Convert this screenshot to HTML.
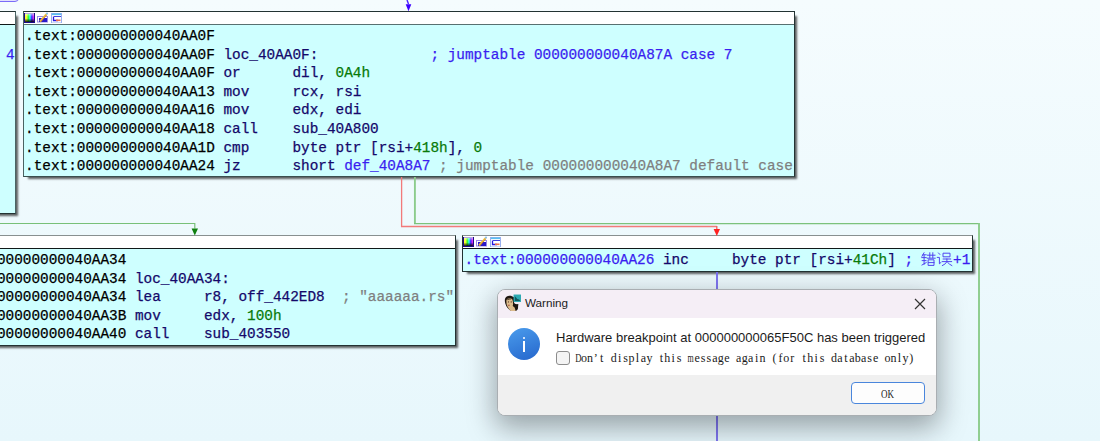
<!DOCTYPE html>
<html><head><meta charset="utf-8">
<style>
html,body{margin:0;padding:0;}
body{width:1100px;height:441px;overflow:hidden;position:relative;background:linear-gradient(#f5fcfe,#e7f7fc);font-family:"Liberation Mono",monospace;}
.abs{position:absolute;}
.node{position:absolute;border:1px solid #223232;background:#ceffff;box-shadow:3.5px 3.5px 2px -1.5px rgba(0,0,0,0.62);}
.hdr{position:absolute;left:0;right:0;top:0;height:12px;background:#fff;border-bottom:1px solid #101818;}
.code{position:absolute;-webkit-text-stroke:0.25px currentColor;font-size:14.38px;line-height:18.56px;white-space:pre;color:#000;}
.n{color:#14086a;}
.g{color:#087a08;}
.b{color:#3a1ef0;}
.gr{color:#7f7f7f;}
.cb{font-family:"Liberation Serif",serif;font-size:12px;line-height:14px;color:#1a1a1a;white-space:nowrap;}
.cb i{font-style:normal;display:inline-flex;justify-content:center;width:5.965px;}
.cb b{font-weight:normal;display:inline-block;}
</style></head><body>

<!-- purple partial box at top-left -->
<div class="abs" style="left:-10px;top:-6px;width:27px;height:6px;background:#e2e0fd;border:1.5px solid #7b6cf8;border-radius:4px;"></div>

<!-- left partial node -->
<div class="node" style="left:-10px;top:11px;width:24px;height:201px;border-right-color:#4a6464;">
  <div class="hdr"></div>
  <div class="code" style="left:15px;top:33.8px;"><span class="b">4</span></div>
</div>

<!-- main node -->
<div class="node" style="left:23px;top:11px;width:770px;height:164px;border-left-color:#4a6262;border-bottom-color:#3a4e4e;">
  <div class="hdr" style="border-bottom-color:#587070;"><svg class="abs" style="left:0;top:0px;" width="40" height="11" viewBox="0 0 40 11">
<defs>
<linearGradient id="rb" x1="0" x2="1" y1="0" y2="0"><stop offset="0" stop-color="#ffff30"/><stop offset="0.15" stop-color="#ffff30"/><stop offset="0.38" stop-color="#30ff30"/><stop offset="0.55" stop-color="#30ffff"/><stop offset="0.75" stop-color="#4020ff"/><stop offset="1" stop-color="#ff30f0"/></linearGradient>
<linearGradient id="dk" x1="0" x2="0" y1="0" y2="1"><stop offset="0" stop-color="#fff" stop-opacity="0.5"/><stop offset="0.35" stop-color="#fff" stop-opacity="0"/><stop offset="0.55" stop-color="#000" stop-opacity="0"/><stop offset="1" stop-color="#000" stop-opacity="0.9"/></linearGradient>
</defs>
<rect x="0" y="1" width="11" height="10" fill="#1c0a8a"/>
<rect x="1" y="1" width="9" height="1" fill="#b8a8e0"/>
<rect x="1" y="2" width="9" height="8" fill="url(#rb)"/>
<rect x="1" y="2" width="9" height="8" fill="url(#dk)"/>
<rect x="13.5" y="4.5" width="10" height="5.5" fill="none" stroke="#9888e8" stroke-width="1"/>
<rect x="15" y="6" width="8" height="4" fill="#2a18c8"/>
<path d="M16 9.5 L22.5 2.2" stroke="#e8c040" stroke-width="1.9"/>
<path d="M16.5 9.8 L22.8 2.8" stroke="#d07020" stroke-width="0.7"/>
<circle cx="23" cy="1.6" r="1.1" fill="#88c0e8"/>
<rect x="27.5" y="1.5" width="10" height="9.5" fill="#fff" stroke="#98b0f0" stroke-width="1"/>
<rect x="28" y="1.5" width="9" height="1.6" fill="#58c0f0"/>
<path d="M30 4.5 H37" stroke="#4040e0" stroke-width="1"/>
<path d="M29.5 4.5 V8.5 H34" stroke="#2818e0" stroke-width="1.3" fill="none"/>
<path d="M32 8.3 H36.5" stroke="#e87050" stroke-width="1.6"/>
</svg></div>
  <div class="code" style="left:1px;top:15.2px;">.text:000000000040AA0F
.text:000000000040AA0F <span class="n">loc_40AA0F:</span>             <span class="b">; jumptable 000000000040A87A case 7</span>
.text:000000000040AA0F <span class="n">or      dil, </span><span class="g">0A4h</span>
.text:000000000040AA13 <span class="n">mov     rcx, rsi</span>
.text:000000000040AA16 <span class="n">mov     edx, edi</span>
.text:000000000040AA18 <span class="n">call    sub_40A800</span>
.text:000000000040AA1D <span class="n">cmp     byte ptr [rsi+</span><span class="g">418h</span><span class="n">], </span><span class="g">0</span>
.text:000000000040AA24 <span class="n">jz      short </span><span class="b">def_40A8A7</span> <span class="gr">; jumptable 000000000040A8A7 default case</span></div>
</div>

<!-- bottom-left node -->
<div class="node" style="left:-10px;top:235px;width:464px;height:109px;border-top-color:#889090;">
  <div class="hdr"></div>
  <div class="code" style="left:-54.5px;top:15.2px;">.text:000000000040AA34
.text:000000000040AA34 <span class="n">loc_40AA34:</span>
.text:000000000040AA34 <span class="n">lea     r8, off_442ED8</span>  <span class="gr">; "aaaaaa.rs"</span>
.text:000000000040AA3B <span class="n">mov     edx, </span><span class="g">100h</span>
.text:000000000040AA40 <span class="n">call    sub_403550</span></div>
</div>

<!-- right node -->
<div class="node" style="left:462px;top:235px;width:509px;height:35px;border-top-color:#889090;">
  <div class="hdr"><svg class="abs" style="left:0;top:0px;" width="40" height="11" viewBox="0 0 40 11">
<defs>
<linearGradient id="rb" x1="0" x2="1" y1="0" y2="0"><stop offset="0" stop-color="#ffff30"/><stop offset="0.15" stop-color="#ffff30"/><stop offset="0.38" stop-color="#30ff30"/><stop offset="0.55" stop-color="#30ffff"/><stop offset="0.75" stop-color="#4020ff"/><stop offset="1" stop-color="#ff30f0"/></linearGradient>
<linearGradient id="dk" x1="0" x2="0" y1="0" y2="1"><stop offset="0" stop-color="#fff" stop-opacity="0.5"/><stop offset="0.35" stop-color="#fff" stop-opacity="0"/><stop offset="0.55" stop-color="#000" stop-opacity="0"/><stop offset="1" stop-color="#000" stop-opacity="0.9"/></linearGradient>
</defs>
<rect x="0" y="1" width="11" height="10" fill="#1c0a8a"/>
<rect x="1" y="1" width="9" height="1" fill="#b8a8e0"/>
<rect x="1" y="2" width="9" height="8" fill="url(#rb)"/>
<rect x="1" y="2" width="9" height="8" fill="url(#dk)"/>
<rect x="13.5" y="4.5" width="10" height="5.5" fill="none" stroke="#9888e8" stroke-width="1"/>
<rect x="15" y="6" width="8" height="4" fill="#2a18c8"/>
<path d="M16 9.5 L22.5 2.2" stroke="#e8c040" stroke-width="1.9"/>
<path d="M16.5 9.8 L22.8 2.8" stroke="#d07020" stroke-width="0.7"/>
<circle cx="23" cy="1.6" r="1.1" fill="#88c0e8"/>
<rect x="27.5" y="1.5" width="10" height="9.5" fill="#fff" stroke="#98b0f0" stroke-width="1"/>
<rect x="28" y="1.5" width="9" height="1.6" fill="#58c0f0"/>
<path d="M30 4.5 H37" stroke="#4040e0" stroke-width="1"/>
<path d="M29.5 4.5 V8.5 H34" stroke="#2818e0" stroke-width="1.3" fill="none"/>
<path d="M32 8.3 H36.5" stroke="#e87050" stroke-width="1.6"/>
</svg></div>
  <div class="code" style="left:1.5px;top:15.2px;"><span class="b">.text:000000000040AA26</span> <span class="n">inc     byte ptr [rsi+</span><span class="g">41Ch</span><span class="n">]</span> <span class="b">;     <span style="position:relative;left:-3.2px">+1</span></span></div>
</div>


<!-- CJK glyphs drawn -->
<svg class="abs" style="left:921px;top:252px;" width="34" height="15" viewBox="0 0 34 15">
<g stroke="#4c3cf0" stroke-width="0.95" fill="none" stroke-linecap="square">
<path d="M3 0.8 L1 4.2"/><path d="M2 2.8 H5.2"/><path d="M0.8 5.6 H5.2"/><path d="M1.2 8.6 H5"/><path d="M3.1 3 V12.2"/><path d="M1 13 L5.2 10.6"/>
<path d="M6.5 3.2 H14"/><path d="M8.8 0.8 V5.8"/><path d="M11.8 0.8 V5.8"/><path d="M6.2 6.2 H14.2"/>
<path d="M7.6 7.8 H13 V13.4 H7.6 Z"/><path d="M7.6 10.6 H13"/>
<path d="M17.5 1 L18.8 2.4"/><path d="M16.3 5.4 H18.4 V11.8 L20 10.4"/>
<path d="M22.5 1.2 H29 V4.8 H22.5 Z"/><path d="M22.2 7 H29.6"/><path d="M21.4 9.6 H30.6"/>
<path d="M25.9 7 V9.6 Q25 12 21.4 13.6"/><path d="M26.6 10.4 Q28.2 12.4 30.8 13.6"/>
</g></svg>

<!-- edges -->
<svg class="abs" style="left:0;top:0;" width="1100" height="441">
  <path d="M407 0 L408.5 4" stroke="#4a20ff" stroke-width="1.4" fill="none"/>
  <polygon points="405.7,4.2 411.3,4.2 408.5,11.2" fill="#3c00ff"/>
  <path d="M401.6 177 V226.5 H716.8" stroke="#f27a7a" stroke-width="1.3" fill="none"/>
  <path d="M716.8 226 V229" stroke="#f06060" stroke-width="1.3" fill="none"/>
  <polygon points="713.6,229 720,229 716.8,236" fill="#ff2020"/>
  <path d="M414.9 177 V223.6" stroke="#8ccc8c" stroke-width="1.9" fill="none"/>
  <path d="M414 223.6 H979" stroke="#7cc27c" stroke-width="1.3" fill="none"/>
  <path d="M979 223 V441" stroke="#8ccc8c" stroke-width="1.9" fill="none"/>
  <path d="M0 223.5 H194.8 V228.5" stroke="#78c078" stroke-width="1.2" fill="none"/>
  <polygon points="191.6,228.5 198,228.5 194.8,235.5" fill="#108010"/>
  <path d="M717 272 V441" stroke="#7a6ff0" stroke-width="1.9" fill="none"/>
</svg>

<!-- dialog -->
<div class="abs" style="left:497px;top:289px;width:438px;height:125px;border:1px solid #a9aeb2;border-radius:8px;box-shadow:0 10px 28px 2px rgba(10,15,20,0.36);background:#fff;overflow:hidden;font-family:'Liberation Sans',sans-serif;">
  <div class="abs" style="left:0;top:0;width:438px;height:28px;background:#f5eef6;"></div>
  <svg class="abs" style="left:6px;top:4px;" width="17" height="17" viewBox="0 0 16 16">
    <path d="M0.8 5.5 C1 2.5 3.5 1.2 6.5 1.6 L9.5 3 L9.5 8.5 C10.5 9.5 12 9.8 13.5 9.5 L13.2 12.5 C13.5 14 12.5 15.5 11 16 L7 16 C3.5 14.5 0.6 10 0.8 5.5Z" fill="#1e1610"/>
    <path d="M2.2 6 C2.8 3.8 6 3.2 7.6 4.8 C8.6 6.5 8.8 9.5 8.2 11.2 L10 12.8 L11 16 L6.5 16 C4.5 14.5 3 12 2.4 9.5Z" fill="#dcbb8c"/>
    <path d="M3 5.2 C4 4.2 6 4 7.2 4.8 L6 5.2 C5 5 4 5.2 3 5.8Z" fill="#3a2a1a"/>
    <circle cx="4.2" cy="7.5" r="0.6" fill="#5a3a28"/>
    <circle cx="6.8" cy="7.5" r="0.6" fill="#5a3a28"/>
    <path d="M3.6 10.6 L5.4 10.6" stroke="#a04030" stroke-width="0.8"/>
    <rect x="9" y="0.5" width="7.3" height="7" fill="#2eaab2"/>
    <path d="M10.2 2 V6.6 H15.3 L14.2 5.2 L12.5 4.8 L11.2 3Z" fill="#115a60"/>
  </svg>
  <div class="abs" style="left:27px;top:6px;font-size:11.7px;line-height:14px;color:#1b1b1b;">Warning</div>
  <svg class="abs" style="left:416px;top:8px;" width="12" height="12" viewBox="0 0 12 12"><path d="M1 1 L11 11 M11 1 L1 11" stroke="#333" stroke-width="1.2"/></svg>
  
  <div class="abs" style="left:10px;top:38px;width:32px;height:32px;border-radius:50%;background:linear-gradient(160deg,#4a9cec,#2566cc);"></div>
  <div class="abs" style="left:25px;top:47px;width:2.4px;height:2.4px;border-radius:50%;background:#fff;"></div>
  <div class="abs" style="left:25px;top:51px;width:2.2px;height:11px;background:#fff;"></div>
  <div class="abs" style="left:58px;top:39.5px;font-size:13px;line-height:15px;color:#1b1b1b;white-space:nowrap;">Hardware breakpoint at 000000000065F50C has been triggered</div>
  <div class="abs" style="left:58px;top:61px;width:12px;height:12px;border:1px solid #8c8c8c;border-radius:3px;background:#f4f4f4;"></div>
  <div class="abs cb" style="left:77px;top:61px;"><i><b style="transform:scaleX(0.72)">D</b></i><i><b>o</b></i><i><b>n</b></i><i><b>’</b></i><i><b>t</b></i><i> </i><i><b>d</b></i><i><b>i</b></i><i><b>s</b></i><i><b>p</b></i><i><b>l</b></i><i><b>a</b></i><i><b>y</b></i><i> </i><i><b>t</b></i><i><b>h</b></i><i><b>i</b></i><i><b>s</b></i><i> </i><i><b style="transform:scaleX(0.66)">m</b></i><i><b>e</b></i><i><b>s</b></i><i><b>s</b></i><i><b>a</b></i><i><b>g</b></i><i><b>e</b></i><i> </i><i><b>a</b></i><i><b>g</b></i><i><b>a</b></i><i><b>i</b></i><i><b>n</b></i><i> </i><i><b>(</b></i><i><b>f</b></i><i><b>o</b></i><i><b>r</b></i><i> </i><i><b>t</b></i><i><b>h</b></i><i><b>i</b></i><i><b>s</b></i><i> </i><i><b>d</b></i><i><b>a</b></i><i><b>t</b></i><i><b>a</b></i><i><b>b</b></i><i><b>a</b></i><i><b>s</b></i><i><b>e</b></i><i> </i><i><b>o</b></i><i><b>n</b></i><i><b>l</b></i><i><b>y</b></i><i><b>)</b></i></div>
  <div class="abs" style="left:0;top:85px;width:438px;height:41px;background:#f0f0f0;"></div>
  <div class="abs" style="left:353px;top:92px;width:72px;height:20px;border:1px solid #4a86dc;border-radius:4px;background:#fdfdfd;"></div>
  <div class="abs" style="left:383px;top:98px;font-family:'Liberation Serif',serif;font-size:12px;line-height:12px;color:#1a1a1a;transform:scaleX(0.75);transform-origin:0 0;">OK</div>
</div>

</body></html>
